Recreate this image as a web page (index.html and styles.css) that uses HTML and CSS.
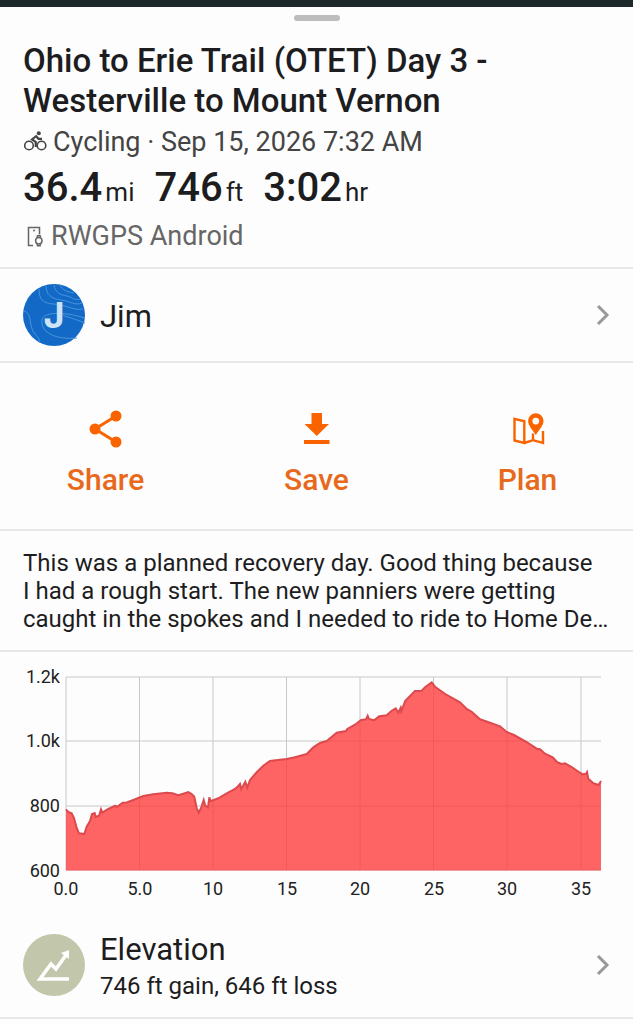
FILE: index.html
```html
<!doctype html>
<html lang="en">
<head>
    <meta charset="UTF-8">
    <meta name="viewport" content="width=device-width, initial-scale=1.0">
    <title>Ohio to Erie Trail (OTET) Day 3</title>
    <link rel="stylesheet" href="styles.css">
</head>
<body>
<div class="map-edge"></div>
<main class="sheet">
    <div class="handle"></div>

    <header class="summary">
        <h1 class="title">Ohio to Erie Trail (OTET) Day 3 - Westerville to Mount Vernon</h1>
        <p class="meta">
            <svg class="bike-icon" viewBox="0 0 24 24" aria-hidden="true">
                <g fill="none" stroke="currentColor">
                    <circle cx="6" cy="15.500" r="4.300" stroke-width="1.600"/>
                    <circle cx="18.500" cy="15.500" r="4.300" stroke-width="1.600"/>
                    <path d="M14 5.500L9 9.500L12.800 12V17M12.500 5.500L15.500 8.800H19" stroke-width="2.200"/>
                </g>
                <circle cx="15.800" cy="3.200" r="2" fill="currentColor"/>
            </svg>
            <span>Cycling · Sep 15, 2026 7:32 AM</span>
        </p>
        <div class="stats">
            <span><b>36.4</b>mi</span>
            <span><b>746</b>ft</span>
            <span><b>3:02</b>hr</span>
        </div>
        <p class="source">
            <svg class="device-icon" viewBox="0 0 24 24" aria-hidden="true">
                <g fill="none" stroke="currentColor" stroke-width="1.500">
                    <path d="M10 21.500H5.500V3.500H16.500V10.500"/>
                    <circle cx="15.800" cy="16.800" r="3.200"/>
                    <path d="M14 13.500L14.500 11.800H17.100L17.600 13.500M14 20L14.500 21.800H17.100L17.600 20"/>
                </g>
                <circle cx="11" cy="6.500" r="1" fill="currentColor"/>
            </svg>
            <span>RWGPS Android</span>
        </p>
    </header>

    <a class="row user" href="#">
        <svg class="avatar" viewBox="0 0 62 62" aria-hidden="true">
            <circle cx="31" cy="31" r="31" fill="#126ac6"/>
            <g fill="none" stroke="#4a94dc" stroke-width="1">
                <path d="M16 5C16 16 20 19 30 20C42 20 50 27 60 25"/>
                <path d="M23 2C23 10 28 15 38 16C47 17 52 22 59 19"/>
                <path d="M31 1C32 8 37 11 44 12C49 13 52 17 57 15"/>
                <path d="M37 1C39 6 44 8 51 9"/>
                <path d="M1 27C10 29 5 43 12 50C16 54 17 57 16 59"/>
                <path d="M61 34C48 29 20 26 19 36C17 49 34 56 54 54"/>
                <path d="M62 39C50 34 43 33 40 31"/>
            </g>
            <text class="avatar-letter" x="31" y="44" text-anchor="middle">J</text>
        </svg>
        <span class="row-title">Jim</span>
        <svg class="chevron" viewBox="0 0 14 22" aria-hidden="true"><path d="M2 2L11 11L2 20"/></svg>
    </a>

    <div class="actions">
        <button class="action" type="button">
            <svg class="action-icon" viewBox="0 0 40 40" aria-hidden="true">
                <path d="M30 7L9 20L30 33" fill="none" stroke="currentColor" stroke-width="3"/>
                <g fill="currentColor">
                    <circle cx="30" cy="7" r="5.500"/>
                    <circle cx="9" cy="20" r="5.500"/>
                    <circle cx="30" cy="33" r="5.500"/>
                </g>
            </svg>
            <span>Share</span>
        </button>
        <button class="action" type="button">
            <svg class="action-icon" viewBox="0 0 40 40" aria-hidden="true">
                <path d="M14.500 4H25V15H32L19.800 27L7.500 15H14.500ZM7 31H32.500V35H7Z" fill="currentColor"/>
            </svg>
            <span>Save</span>
        </button>
        <button class="action" type="button">
            <svg class="action-icon" viewBox="0 0 40 40" aria-hidden="true">
                <path d="M6.500 9.800L16.300 12.300V34L6.500 31.500ZM16.300 34L25 31.200L35 34V22M25 31.200V24.500" fill="none" stroke="currentColor" stroke-width="2.400"/>
                <path d="M27.800 4.300A7.700 7.700 0 0 0 20.100 12C20.100 17 25 21 27.800 26C30.600 21 35.500 17 35.500 12A7.700 7.700 0 0 0 27.800 4.300ZM27.800 8.700A3.400 3.400 0 1 1 27.800 15.500A3.400 3.400 0 1 1 27.800 8.700Z" fill="currentColor" fill-rule="evenodd"/>
            </svg>
            <span>Plan</span>
        </button>
    </div>

    <p class="description">This was a planned recovery day. Good thing because I&nbsp;had a rough start. The new panniers were getting caught in the spokes and I needed to ride to Home&nbsp;De…</p>

    <svg class="chart" viewBox="0 0 633 254" role="img" aria-label="Elevation">
        <path class="grid" d="M66 25H601M66 89H601M66 154H601M66 218H601M66 25V218M139.500 25V218M213 25V218M286.500 25V218M360 25V218M433.500 25V218M507 25V218M581 25V218"/>
        <path class="area" d="M66 218.500V157.300L68.300 160L71.700 161.300L74 166L76.700 176L79 181.300L84.300 182L86.700 174.700L90 169L92 162L94.700 161L95.700 165L99 163.700L101 157.300L102.300 160.700L108.300 157L115.300 153.700L116.700 155L122.700 150.700L126.700 150.500L133.300 148L143.300 144L153.300 142.300L166.700 140.700L172.300 141.300L178.300 143.300L183.300 141.700L188.300 140L191.700 142L194.300 144.700L196.700 156.300L198.700 160.700L201 156.300L203.700 148L205.300 153.700L208 155.300L209.300 145.300L210.700 149.300L218.300 146.300L226.700 141.300L235 137L238.300 134L240 132L241.300 137.300L245.300 129.700L247.300 135.700L250 128L256.700 120.300L263.300 113.700L270 109L280 107.700L286.700 107L295 105.300L306.700 102L313.300 95.300L320 91L326.700 89L336.700 80.700L346 79L347.300 77L355 72.700L360.700 68.300L366 67.300L367.700 63.700L369 67L374 68.300L379.300 64.300L386.700 63.300L391.700 58.700L395.700 56.300L398.300 60.700L400.700 55.700L401.300 59.300L405.300 48.700L415 39L421.700 38.700L425 35.300L431.700 30.300L435 34.700L446.700 43L460 50.300L466.700 57L471.700 59.700L480 67.300L490 70.700L500 74.300L506.700 80L514 83L526.700 90L536.700 96.700L540 97.300L545 101.700L552.700 105.300L557.300 110.300L561.700 112L565 111.300L571.700 115L580 120.700L582.700 122.300L586 121.700L587 120L588.300 126.700L593.300 131.300L598.700 133L601 129V218.500Z"/>
        <path class="profile" d="M66 157.300L68.300 160L71.700 161.300L74 166L76.700 176L79 181.300L84.300 182L86.700 174.700L90 169L92 162L94.700 161L95.700 165L99 163.700L101 157.300L102.300 160.700L108.300 157L115.300 153.700L116.700 155L122.700 150.700L126.700 150.500L133.300 148L143.300 144L153.300 142.300L166.700 140.700L172.300 141.300L178.300 143.300L183.300 141.700L188.300 140L191.700 142L194.300 144.700L196.700 156.300L198.700 160.700L201 156.300L203.700 148L205.300 153.700L208 155.300L209.300 145.300L210.700 149.300L218.300 146.300L226.700 141.300L235 137L238.300 134L240 132L241.300 137.300L245.300 129.700L247.300 135.700L250 128L256.700 120.300L263.300 113.700L270 109L280 107.700L286.700 107L295 105.300L306.700 102L313.300 95.300L320 91L326.700 89L336.700 80.700L346 79L347.300 77L355 72.700L360.700 68.300L366 67.300L367.700 63.700L369 67L374 68.300L379.300 64.300L386.700 63.300L391.700 58.700L395.700 56.300L398.300 60.700L400.700 55.700L401.300 59.300L405.300 48.700L415 39L421.700 38.700L425 35.300L431.700 30.300L435 34.700L446.700 43L460 50.300L466.700 57L471.700 59.700L480 67.300L490 70.700L500 74.300L506.700 80L514 83L526.700 90L536.700 96.700L540 97.300L545 101.700L552.700 105.300L557.300 110.300L561.700 112L565 111.300L571.700 115L580 120.700L582.700 122.300L586 121.700L587 120L588.300 126.700L593.300 131.300L598.700 133L601 129"/>
        <g class="axis" text-anchor="end">
            <text x="60" y="31">1.2k</text>
            <text x="60" y="95">1.0k</text>
            <text x="60" y="160">800</text>
            <text x="60" y="225">600</text>
        </g>
        <g class="axis" text-anchor="middle">
            <text x="66" y="243">0.0</text>
            <text x="140" y="243">5.0</text>
            <text x="213" y="243">10</text>
            <text x="287" y="243">15</text>
            <text x="360" y="243">20</text>
            <text x="434" y="243">25</text>
            <text x="507" y="243">30</text>
            <text x="581" y="243">35</text>
        </g>
    </svg>

    <a class="row elevation" href="#">
        <svg class="avatar" viewBox="0 0 62 62" aria-hidden="true">
            <circle cx="31" cy="31" r="31" fill="#c2c6ab"/>
            <path d="M46 45H17L28 30L33 35L43 21" fill="none" stroke="#fff" stroke-width="3.500"/>
            <path d="M46 16V25L38 19Z" fill="#fff"/>
        </svg>
        <span class="row-text">
            <span class="row-title">Elevation</span>
            <span class="row-detail">746 ft gain, 646 ft loss</span>
        </span>
        <svg class="chevron" viewBox="0 0 14 22" aria-hidden="true"><path d="M2 2L11 11L2 20"/></svg>
    </a>
</main>
</body>
</html>
```

FILE: styles.css
```css
body {
    margin: 0;
    background-color: #fdfdfd;
    color: #1d1d1f;
    font-family: Roboto, "Liberation Sans", sans-serif;
}
.map-edge {
    height: 7px;
    background-color: #1d282b;
}
.handle {
    width: 46px;
    height: 6px;
    margin: 0 auto;
    border-radius: 3px;
    background-color: #bdbdbd;
}
.sheet {
    padding-top: 8px;
}
.summary {
    padding: 20px 23px 15px;
    border-bottom: 2px solid #e8e8e8;
}
.title {
    margin: 0;
    font-size: 33px;
    font-weight: 500;
    line-height: 40px;
}
.meta,
.source {
    display: flex;
    align-items: center;
    gap: 6px;
    margin: 0;
    font-size: 27px;
    line-height: 32px;
}
.meta {
    margin-top: 5px;
    color: #444;
}
.source {
    margin-top: 8px;
    gap: 4px;
    color: #666;
}
.bike-icon,
.device-icon {
    width: 24px;
    height: 24px;
}
.stats {
    display: flex;
    gap: 20px;
    margin-top: 6px;
    font-size: 26px;
    line-height: 32px;
}
.stats b {
    margin-right: 3px;
    font-size: 40px;
    font-weight: 500;
    line-height: 48px;
}
.row {
    display: flex;
    align-items: center;
    gap: 15px;
    padding: 0 23px;
    border-bottom: 2px solid #e8e8e8;
    color: inherit;
    text-decoration: none;
}
.user {
    padding-top: 15px;
    padding-bottom: 15px;
}
.elevation {
    padding-top: 20px;
    padding-bottom: 14px;
}
.avatar {
    width: 62px;
    height: 62px;
    flex: none;
}
.avatar-letter {
    fill: #cfe3f7;
    font-family: Inter, Roboto, sans-serif;
    font-size: 36px;
    font-weight: 700;
}
.row-text {
    display: flex;
    flex-direction: column;
    padding-top: 2px;
}
.row-title {
    padding-top: 3px;
    font-size: 31px;
    line-height: 38px;
}
.row-detail {
    font-size: 24px;
    line-height: 34px;
}
.chevron {
    width: 14px;
    height: 22px;
    margin-left: auto;
    fill: none;
    stroke: #999;
    stroke-width: 3;
}
.actions {
    display: grid;
    grid-template-columns: repeat(3, 1fr);
    border-bottom: 2px solid #e8e8e8;
}
.action {
    display: flex;
    flex-direction: column;
    align-items: center;
    gap: 14px;
    padding: 46px 0 32px;
    border: none;
    background: none;
    color: #e8691b;
    font-family: inherit;
    font-size: 30px;
    font-weight: 500;
    line-height: 34px;
    cursor: pointer;
}
.action-icon {
    width: 40px;
    height: 40px;
    color: #fa6400;
}
.description {
    margin: 0;
    padding: 18px 23px 17px;
    border-bottom: 2px solid #e8e8e8;
    font-size: 24px;
    line-height: 28px;
}
.chart {
    display: block;
    width: 100%;
}
.grid {
    fill: none;
    stroke: #c8c8c8;
}
.area {
    fill: rgba(255, 61, 61, 0.8);
}
.profile {
    fill: none;
    stroke: #dc4a4e;
    stroke-width: 2;
}
.axis {
    fill: #222;
    font-size: 18px;
}
```
